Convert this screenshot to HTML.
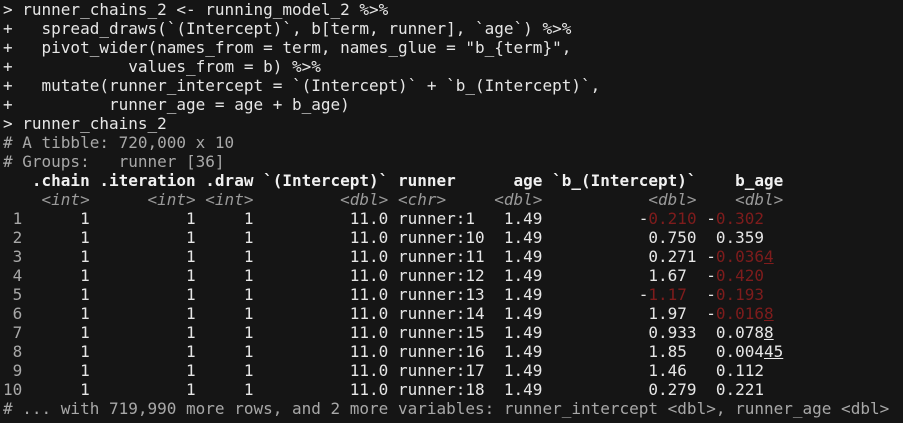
<!DOCTYPE html>
<html><head><meta charset="utf-8"><style>
html,body{margin:0;padding:0;background:#151515;width:903px;height:423px;overflow:hidden}
pre{margin:0;padding:0 0 0 3px;font-family:"DejaVu Sans Mono","Liberation Mono",monospace;font-size:16px;line-height:19px;color:#e6e6e6;letter-spacing:0px}
.c{color:#a8a8a8}
.t{color:#9a9a9a;font-style:italic}
.h{font-weight:bold;color:#f0f0f0}
.r{color:#7e1c1c}
.u{text-decoration:underline}
.g{color:#a8a8a8}
</style></head><body><pre>&gt; runner_chains_2 &lt;- running_model_2 %&gt;%
+   spread_draws(`(Intercept)`, b[term, runner], `age`) %&gt;%
+   pivot_wider(names_from = term, names_glue = "b_{term}",
+            values_from = b) %&gt;%
+   mutate(runner_intercept = `(Intercept)` + `b_(Intercept)`,
+          runner_age = age + b_age)
&gt; runner_chains_2
<span class="c"># A tibble: 720,000 x 10</span>
<span class="c"># Groups:   runner [36]</span>
<span class="h">   .chain .iteration .draw `(Intercept)` runner      age `b_(Intercept)`    b_age</span>
<span class="t">    &lt;int&gt;      &lt;int&gt; &lt;int&gt;         &lt;dbl&gt; &lt;chr&gt;     &lt;dbl&gt;           &lt;dbl&gt;    &lt;dbl&gt;</span>
<span class="g"> 1</span>      1          1     1          11.0 runner:1   1.49          -<span class="r">0.210</span> -<span class="r">0.302</span>
<span class="g"> 2</span>      1          1     1          11.0 runner:10  1.49           0.750  0.359
<span class="g"> 3</span>      1          1     1          11.0 runner:11  1.49           0.271 -<span class="r">0.036<span class="u">4</span></span>
<span class="g"> 4</span>      1          1     1          11.0 runner:12  1.49           1.67  -<span class="r">0.420</span>
<span class="g"> 5</span>      1          1     1          11.0 runner:13  1.49          -<span class="r">1.17</span>  -<span class="r">0.193</span>
<span class="g"> 6</span>      1          1     1          11.0 runner:14  1.49           1.97  -<span class="r">0.016<span class="u">8</span></span>
<span class="g"> 7</span>      1          1     1          11.0 runner:15  1.49           0.933  0.078<span class="u">8</span>
<span class="g"> 8</span>      1          1     1          11.0 runner:16  1.49           1.85   0.004<span class="u">45</span>
<span class="g"> 9</span>      1          1     1          11.0 runner:17  1.49           1.46   0.112
<span class="g">10</span>      1          1     1          11.0 runner:18  1.49           0.279  0.221
<span class="c"># ... with 719,990 more rows, and 2 more variables: runner_intercept &lt;dbl&gt;, runner_age &lt;dbl&gt;</span>
&gt;</pre></body></html>
